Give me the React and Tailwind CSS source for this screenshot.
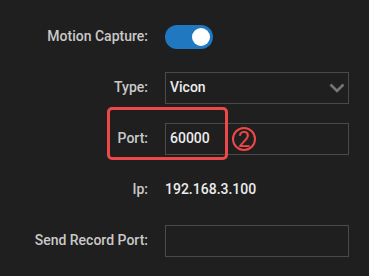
import React from "react";

const Label = ({ children }) => (
  <div className="w-[148px] shrink-0 text-right text-[14px] font-medium text-[#c9c9c9]">{children}</div>
);

export default function App() {
  return (
    <div
      className="w-[369px] h-[276px] bg-[#1f1f1f] pt-[11px] overflow-hidden"
      style={{ fontFamily: "Roboto, 'Liberation Sans', sans-serif" }}
    >
      <div className="flex h-[51px] items-center gap-[17px]">
        <Label>Motion Capture:</Label>
        <div className="relative h-[24px] w-[48px] rounded-full bg-[#2079c0]">
          <div className="absolute right-[3px] top-[3px] h-[18px] w-[18px] rounded-full bg-white" />
        </div>
      </div>
      <div className="flex h-[51px] items-center gap-[17px]">
        <Label>Type:</Label>
        <div className="flex h-[32px] w-[184px] items-center justify-between border border-[#4a4a4a] pl-[4px] pr-[3px]">
          <span className="text-[14px] font-medium text-[#ececec]">Vicon</span>
          <svg width="16" height="10" viewBox="0 0 16 10">
            <path d="M1.5 1.5 L8 8 L14.5 1.5" fill="none" stroke="#767676" strokeWidth="2.6" />
          </svg>
        </div>
      </div>
      <div className="relative flex h-[51px] items-center gap-[17px]">
        <Label>Port:</Label>
        <div className="flex h-[32px] w-[184px] items-center border border-[#4a4a4a] pl-[4px]">
          <span className="text-[14px] font-medium text-[#ececec]">60000</span>
        </div>
        <div className="absolute left-[107px] top-[-6px] h-[53px] w-[121px] rounded-[5px] border-[3px] border-[#ee4848]" />
        <div className="absolute left-[232px] top-[14px] flex h-[24px] w-[24px] items-center justify-center rounded-full border-2 border-[#ee4848] text-[22px] font-normal leading-none text-[#ee4848]">
          <span className="mt-[1px]">2</span>
        </div>
      </div>
      <div className="flex h-[51px] items-center gap-[17px]">
        <Label>Ip:</Label>
        <span className="text-[14px] font-medium text-[#ececec]">192.168.3.100</span>
      </div>
      <div className="flex h-[51px] items-center gap-[17px]">
        <Label>Send Record Port:</Label>
        <div className="h-[32px] w-[184px] border border-[#4a4a4a]" />
      </div>
    </div>
  );
}
